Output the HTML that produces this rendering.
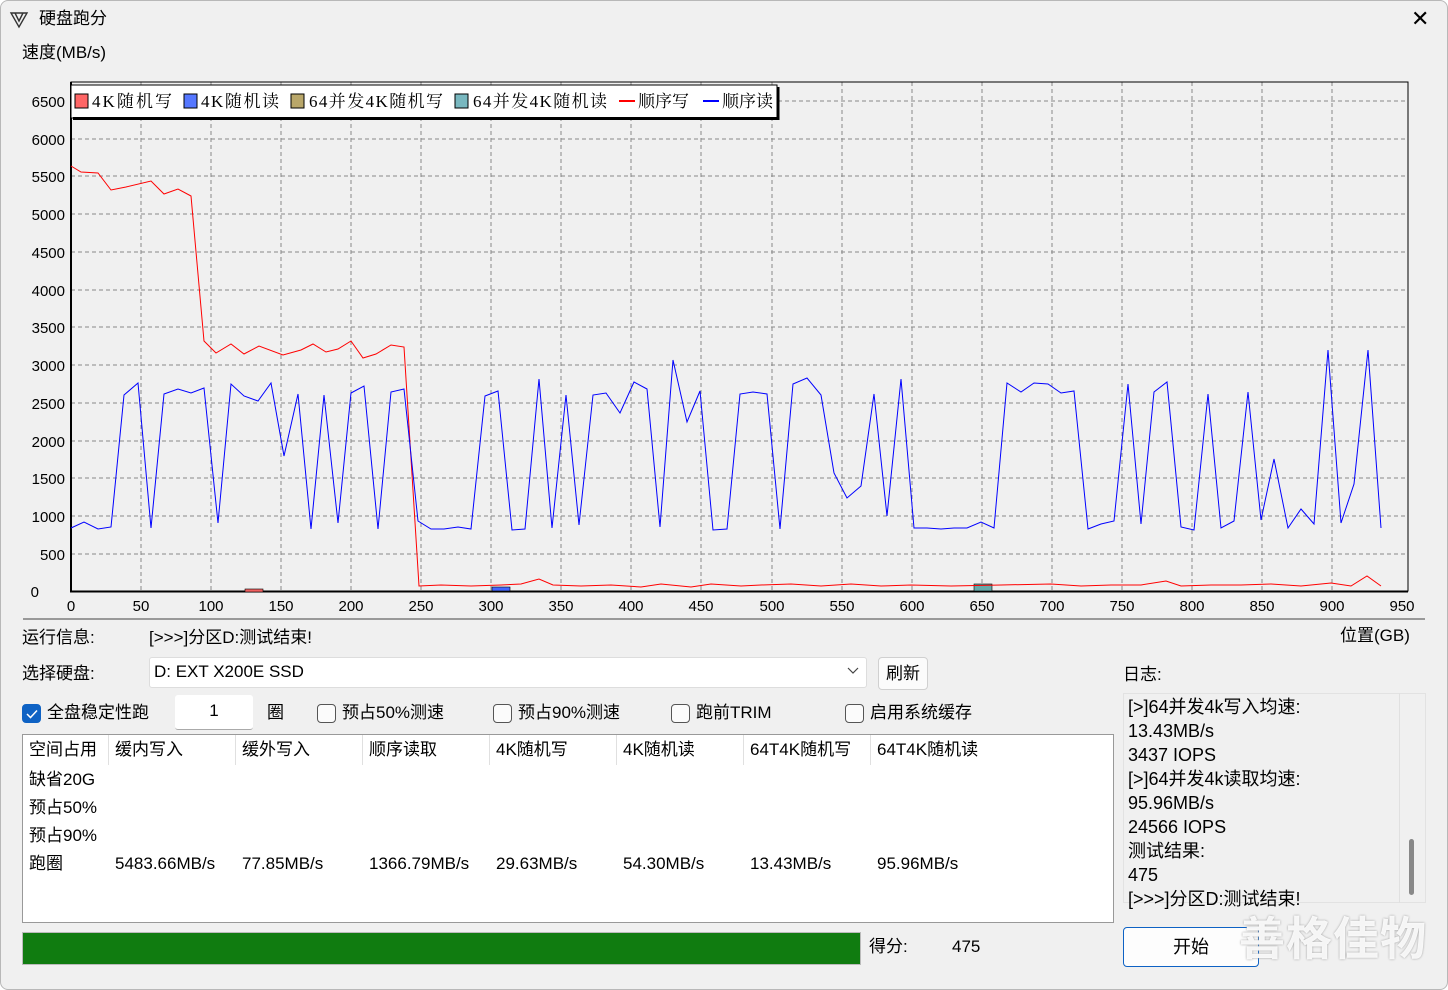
<!DOCTYPE html>
<html><head><meta charset="utf-8"><style>
*{margin:0;padding:0;box-sizing:border-box}
body{width:1448px;height:990px;background:#fff;font-family:"Liberation Sans","Noto Sans CJK SC",sans-serif;color:#000;position:relative;overflow:hidden}
.win{position:absolute;left:0;top:0;width:1448px;height:990px;background:#f0f0f0;border:1px solid #b8b8b8;border-radius:8px}
.a{position:absolute;white-space:nowrap}
.t{font-size:17px;line-height:22px}
.cb{position:absolute;width:19px;height:19px;border:1px solid #555;border-radius:4px;background:#fbfbfb}
.hd{position:absolute;top:0;height:30px;border-right:1px solid #e0e0e0;padding-left:6px;font-size:17px;line-height:30px}
</style></head><body>
<div class="win">
<svg class="a" style="left:8px;top:10px" width="20" height="18" viewBox="0 0 20 18"><path d="M2 2 L18 2 L10 16 Z M6 2 L10 10 L14 2" fill="none" stroke="#333" stroke-width="1.4"/></svg>
<div class="a" style="left:38px;top:7px;font-size:17px;line-height:22px">硬盘跑分</div>
<div class="a" style="left:1410px;top:5px;font-size:22px;font-weight:300">✕</div>
<div class="a t" style="left:21px;top:41px">速度(MB/s)</div>

<div class="a" style="left:22px;top:66px;width:1402px;height:553px;background:#f0f0f0;border-bottom:2px solid #999"></div>
<svg class="a" style="left:0;top:0" width="1448" height="630">
<g stroke="#888" stroke-dasharray="4,3" stroke-width="1">
<line x1="70" y1="100" x2="1407" y2="100"/><line x1="70" y1="138" x2="1407" y2="138"/><line x1="70" y1="175" x2="1407" y2="175"/><line x1="70" y1="213" x2="1407" y2="213"/><line x1="70" y1="251" x2="1407" y2="251"/><line x1="70" y1="289" x2="1407" y2="289"/><line x1="70" y1="326" x2="1407" y2="326"/><line x1="70" y1="364" x2="1407" y2="364"/><line x1="70" y1="402" x2="1407" y2="402"/><line x1="70" y1="440" x2="1407" y2="440"/><line x1="70" y1="477" x2="1407" y2="477"/><line x1="70" y1="515" x2="1407" y2="515"/><line x1="70" y1="553" x2="1407" y2="553"/>
<line x1="140" y1="81" x2="140" y2="590"/><line x1="210" y1="81" x2="210" y2="590"/><line x1="280" y1="81" x2="280" y2="590"/><line x1="350" y1="81" x2="350" y2="590"/><line x1="420" y1="81" x2="420" y2="590"/><line x1="490" y1="81" x2="490" y2="590"/><line x1="560" y1="81" x2="560" y2="590"/><line x1="630" y1="81" x2="630" y2="590"/><line x1="700" y1="81" x2="700" y2="590"/><line x1="771" y1="81" x2="771" y2="590"/><line x1="841" y1="81" x2="841" y2="590"/><line x1="911" y1="81" x2="911" y2="590"/><line x1="981" y1="81" x2="981" y2="590"/><line x1="1051" y1="81" x2="1051" y2="590"/><line x1="1121" y1="81" x2="1121" y2="590"/><line x1="1191" y1="81" x2="1191" y2="590"/><line x1="1261" y1="81" x2="1261" y2="590"/><line x1="1331" y1="81" x2="1331" y2="590"/>
</g>
<rect x="70" y="81" width="1337" height="509" fill="none" stroke="#000" stroke-width="1"/>
<line x1="70" y1="81" x2="70" y2="591" stroke="#000" stroke-width="2"/>
<line x1="69" y1="590.5" x2="1407" y2="590.5" stroke="#000" stroke-width="2"/>
<rect x="244" y="588" width="18" height="3" fill="#f06060" stroke="#000" stroke-width="0.6"/>
<rect x="491" y="586" width="18" height="4" fill="#4466ff" stroke="#000" stroke-width="0.6"/>
<rect x="973" y="583" width="18" height="7" fill="#6aa" stroke="#000" stroke-width="0.6"/>
<polyline fill="none" stroke="#ff0000" stroke-width="1" points="70,165 80,171 97,172 110,189 125,186 150,180 163,193 177,188 190,195 203,340 215,352 230,343 243,353 258,345 282,354 300,349 312,343 325,351 337,348 350,340 362,357 375,353 390,344 403,346 418,585 440,584 470,585 500,584 520,583 538,578 552,584 580,585 610,584 640,586 660,583 690,586 710,583 740,585 760,584 790,583 820,585 850,583 880,585 910,584 950,585 1000,584 1050,583 1080,585 1110,584 1140,584 1165,580 1180,585 1210,584 1240,584 1270,583 1300,585 1330,582 1350,585 1366,575 1380,585"/>
<polyline fill="none" stroke="#0000ff" stroke-width="1" points="70,527 83,521 97,528 110,526 123,394 137,382 150,527 163,393 177,388 190,392 203,387 217,522 230,383 243,395 257,400 270,382 283,455 297,393 310,528 323,394 337,522 350,392 363,385 377,528 390,391 403,388 417,520 430,528 443,528 457,526 470,528 484,395 497,390 511,529 524,528 538,378 551,527 565,394 578,524 592,394 605,392 619,412 633,381 646,388 659,526 672,359 686,421 699,390 712,529 726,528 739,393 752,391 766,393 779,528 792,383 806,377 820,394 833,472 846,497 860,485 873,393 886,515 900,378 913,527 926,527 940,528 953,527 966,527 980,521 993,527 1006,382 1020,391 1033,382 1047,383 1060,392 1073,390 1087,528 1100,523 1113,520 1127,383 1140,523 1153,391 1166,381 1180,526 1193,529 1207,393 1220,527 1233,520 1247,391 1260,519 1273,458 1287,527 1300,508 1313,523 1327,349 1340,522 1353,483 1367,349 1380,527"/>
<g font-family="Liberation Sans,sans-serif" font-size="15" text-anchor="end">
<text x="64" y="106">6500</text><text x="64" y="144">6000</text><text x="64" y="181">5500</text><text x="64" y="219">5000</text><text x="64" y="257">4500</text><text x="64" y="295">4000</text><text x="64" y="332">3500</text><text x="64" y="370">3000</text><text x="64" y="408">2500</text><text x="64" y="446">2000</text><text x="64" y="483">1500</text><text x="64" y="521">1000</text><text x="64" y="559">500</text><text x="38" y="596">0</text>
</g>
<g font-family="Liberation Sans,sans-serif" font-size="15" text-anchor="middle">
<text x="70" y="610">0</text><text x="140" y="610">50</text><text x="210" y="610">100</text><text x="280" y="610">150</text><text x="350" y="610">200</text><text x="420" y="610">250</text><text x="490" y="610">300</text><text x="560" y="610">350</text><text x="630" y="610">400</text><text x="700" y="610">450</text><text x="771" y="610">500</text><text x="841" y="610">550</text><text x="911" y="610">600</text><text x="981" y="610">650</text><text x="1051" y="610">700</text><text x="1121" y="610">750</text><text x="1191" y="610">800</text><text x="1261" y="610">850</text><text x="1331" y="610">900</text><text x="1401" y="610">950</text>
</g>
<rect x="70" y="84" width="706" height="33" fill="#fff" stroke="#000" stroke-width="1"/>
<line x1="72" y1="117.5" x2="778" y2="117.5" stroke="#000" stroke-width="3"/>
<line x1="777" y1="86" x2="777" y2="119" stroke="#000" stroke-width="3"/>
<rect x="74" y="93" width="13" height="14" fill="#f66" stroke="#000"/>
<rect x="183" y="93" width="13" height="14" fill="#57f" stroke="#000"/>
<rect x="290" y="93" width="13" height="14" fill="#b9a76a" stroke="#000"/>
<rect x="454" y="93" width="13" height="14" fill="#79b8c0" stroke="#000"/>
<line x1="618" y1="100" x2="634" y2="100" stroke="#f00" stroke-width="2"/>
<line x1="702" y1="100" x2="718" y2="100" stroke="#00f" stroke-width="2"/>
<g font-family="Liberation Serif,Noto Serif CJK SC,serif" font-size="17">
<text x="91" y="106" textLength="80">4K随机写</text><text x="200" y="106" textLength="78">4K随机读</text><text x="308" y="106" textLength="134">64并发4K随机写</text><text x="472" y="106" textLength="134">64并发4K随机读</text><text x="637" y="106">顺序写</text><text x="721" y="106">顺序读</text>
</g>
</svg>

<div class="a t" style="left:21px;top:626px">运行信息:</div>
<div class="a t" style="left:148px;top:626px">[&gt;&gt;&gt;]分区D:测试结束!</div>
<div class="a t" style="left:1339px;top:624px">位置(GB)</div>
<div class="a t" style="left:21px;top:662px">选择硬盘:</div>
<div class="a" style="left:148px;top:656px;width:718px;height:31px;background:#fff;border:1px solid #ddd;border-radius:3px"></div>
<div class="a t" style="left:153px;top:660px">D: EXT X200E SSD</div>
<svg class="a" style="left:845px;top:665px" width="14" height="10"><path d="M2 2 L7 7 L12 2" fill="none" stroke="#444" stroke-width="1.2"/></svg>
<div class="a" style="left:877px;top:656px;width:50px;height:33px;background:#fbfbfb;border:1px solid #d0d0d0;border-radius:4px;font-size:17px;text-align:center;line-height:31px">刷新</div>
<div class="a t" style="left:1122px;top:663px">日志:</div>

<div class="cb" style="left:21px;top:703px;background:#0e62c4;border-color:#0e62c4"></div>
<svg class="a" style="left:24px;top:707px" width="14" height="12"><path d="M2 6 L5.5 9.5 L12 2.5" fill="none" stroke="#fff" stroke-width="1.5"/></svg>
<div class="a t" style="left:46px;top:701px">全盘稳定性跑</div>
<div class="a" style="left:174px;top:694px;width:78px;height:35px;background:#fff;border-bottom:1px solid #aaa;border-radius:3px;font-size:17px;text-align:center;line-height:32px">1</div>
<div class="a t" style="left:266px;top:701px">圈</div>
<div class="cb" style="left:316px;top:703px"></div><div class="a t" style="left:341px;top:701px">预占50%测速</div>
<div class="cb" style="left:492px;top:703px"></div><div class="a t" style="left:517px;top:701px">预占90%测速</div>
<div class="cb" style="left:670px;top:703px"></div><div class="a t" style="left:695px;top:701px">跑前TRIM</div>
<div class="cb" style="left:844px;top:703px"></div><div class="a t" style="left:869px;top:701px">启用系统缓存</div>

<div class="a" style="left:21px;top:733px;width:1092px;height:189px;background:#fff;border:1px solid #999">
<div class="hd" style="left:0;width:86px">空间占用</div>
<div class="hd" style="left:86px;width:127px">缓内写入</div>
<div class="hd" style="left:213px;width:127px">缓外写入</div>
<div class="hd" style="left:340px;width:127px">顺序读取</div>
<div class="hd" style="left:467px;width:127px">4K随机写</div>
<div class="hd" style="left:594px;width:127px">4K随机读</div>
<div class="hd" style="left:721px;width:127px">64T4K随机写</div>
<div class="hd" style="left:848px;width:127px;border:none">64T4K随机读</div>
<div class="a t" style="left:6px;top:34px">缺省20G</div>
<div class="a t" style="left:6px;top:62px">预占50%</div>
<div class="a t" style="left:6px;top:90px">预占90%</div>
<div class="a t" style="left:6px;top:118px">跑圈</div>
<div class="a t" style="left:92px;top:118px">5483.66MB/s</div>
<div class="a t" style="left:219px;top:118px">77.85MB/s</div>
<div class="a t" style="left:346px;top:118px">1366.79MB/s</div>
<div class="a t" style="left:473px;top:118px">29.63MB/s</div>
<div class="a t" style="left:600px;top:118px">54.30MB/s</div>
<div class="a t" style="left:727px;top:118px">13.43MB/s</div>
<div class="a t" style="left:854px;top:118px">95.96MB/s</div>
</div>

<div class="a" style="left:1122px;top:692px;width:303px;height:210px;background:#f0f0f0;border:1px solid #e2e2e2"></div>
<div class="a" style="left:1398px;top:692px;width:1px;height:210px;background:#e0e0e0"></div>
<div class="a" style="left:1408px;top:838px;width:5px;height:56px;background:#888;border-radius:3px"></div>
<div class="a" style="left:1127px;top:694px;font-size:18px;line-height:24px">[&gt;]64并发4k写入均速:<br>13.43MB/s<br>3437 IOPS<br>[&gt;]64并发4k读取均速:<br>95.96MB/s<br>24566 IOPS<br>测试结果:<br>475<br>[&gt;&gt;&gt;]分区D:测试结束!</div>

<div class="a" style="left:21px;top:931px;width:839px;height:33px;background:#e6e6e6;border:1px solid #bbb"></div>
<div class="a" style="left:22px;top:932px;width:837px;height:31px;background:#107c10"></div>
<div class="a t" style="left:868px;top:935px">得分:</div>
<div class="a t" style="left:951px;top:935px">475</div>
<div class="a" style="left:1122px;top:926px;width:136px;height:40px;background:#fdfdfd;border:1px solid #0e62c4;border-radius:4px;font-size:18px;text-align:center;line-height:38px">开始</div>
<div class="a" style="left:1238px;top:905px;font-size:46px;line-height:60px;color:rgba(255,255,255,0.9);font-family:'Noto Sans CJK SC',sans-serif;font-weight:bold;letter-spacing:1px;text-shadow:0 0 2px #999">善格佳物</div>
</div>
</body></html>
